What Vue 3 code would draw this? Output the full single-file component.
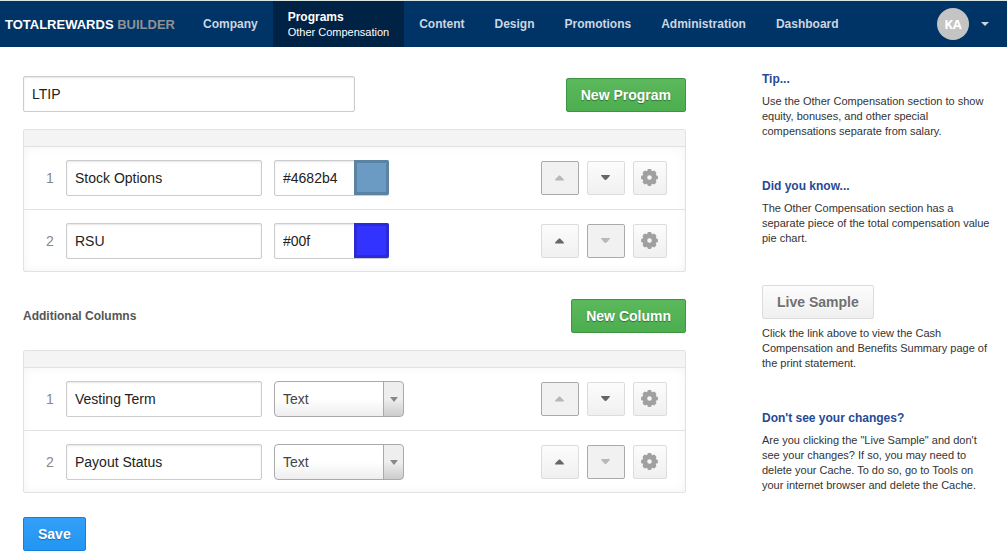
<script setup>
import { ref } from 'vue'

const navItems = [
  { label: 'Company' },
  { label: 'Programs', sub: 'Other Compensation' },
  { label: 'Content' },
  { label: 'Design' },
  { label: 'Promotions' },
  { label: 'Administration' },
  { label: 'Dashboard' },
]

const programName = ref('LTIP')

const panels = ref([
  {
    id: 'programs',
    title: 'Programs',
    rows: [
      { name: 'Stock Options', color: '#4682b4' },
      { name: 'RSU', color: '#00f' },
    ],
  },
  {
    id: 'columns',
    title: 'Additional Columns',
    rows: [
      { name: 'Vesting Term', type: 'Text' },
      { name: 'Payout Status', type: 'Text' },
    ],
  },
])

const gearTeeth = [0, 45, 90, 135]
</script>

<template>
  <header class="topbar">
    <a class="brand" href="#">TOTALREWARDS <span>BUILDER</span></a>
    <nav class="nav">
      <a
        v-for="item in navItems"
        :key="item.label"
        href="#"
        class="nav-item"
        :class="{ active: item.sub }"
      >
        <strong>{{ item.label }}</strong>
        <span v-if="item.sub" class="nav-sub">{{ item.sub }}</span>
      </a>
    </nav>
    <button class="account" type="button" aria-label="Account menu">
      <span class="avatar">KA</span>
      <svg class="caret" viewBox="0 0 8 4" aria-hidden="true"><path d="M0 0h8L4 4z" /></svg>
    </button>
  </header>

  <div class="page">
    <main>
      <template v-for="panel in panels" :key="panel.id">
        <div class="section-head" :class="panel.id">
          <input
            v-if="panel.id === 'programs'"
            v-model="programName"
            class="field title-field"
            type="text"
            aria-label="Section name"
          />
          <h2 v-else>{{ panel.title }}</h2>
          <button class="btn green" type="button">
            {{ panel.id === 'programs' ? 'New Program' : 'New Column' }}
          </button>
        </div>

        <section class="panel" :aria-label="panel.title">
          <div class="panel-head"></div>
          <ol>
            <li v-for="(row, i) in panel.rows" :key="i">
              <span class="num">{{ i + 1 }}</span>
              <input v-model="row.name" class="field name-field" type="text" aria-label="Name" />
              <div v-if="row.color" class="color-field">
                <input v-model="row.color" type="text" aria-label="Color" />
                <button
                  class="swatch"
                  type="button"
                  aria-label="Pick color"
                  :style="{ backgroundColor: row.color }"
                ></button>
              </div>
              <div v-else class="select-box">
                <select v-model="row.type" aria-label="Column type">
                  <option>Text</option>
                  <option>Number</option>
                </select>
              </div>
              <div class="actions">
                <button class="btn icon" type="button" aria-label="Move up" :disabled="i === 0">
                  <svg width="10" height="6" viewBox="0 0 10 6"><path d="M0 5Q0 4.500 4 .6q.5-.4 1 0Q9 4.500 9 5q0 .5-.6.5H.6Q0 5.500 0 5z" /></svg>
                </button>
                <button
                  class="btn icon"
                  type="button"
                  aria-label="Move down"
                  :disabled="i === panel.rows.length - 1"
                >
                  <svg width="10" height="6" viewBox="0 0 10 6"><path d="M0 .5Q0 0 .6 0h7.800Q9 0 9 .5 9 1 5 4.900q-.5.4-1 0Q0 1 0 .5z" /></svg>
                </button>
                <button class="btn icon gear" type="button" aria-label="Settings">
                  <svg width="18" height="18" viewBox="-8.500 -8.500 18 18">
                    <path
                      fill-rule="evenodd"
                      d="M-7 0a7 7 0 1 0 14 0a7 7 0 1 0-14 0zM-2.300 0a2.300 2.300 0 1 0 4.600 0a2.300 2.300 0 1 0-4.600 0z"
                    />
                    <g v-for="a in gearTeeth" :key="a" :transform="`rotate(${a})`">
                      <rect x="-2.100" y="-8.400" width="4.200" height="4" rx="1.300" />
                      <rect x="-2.100" y="4.400" width="4.200" height="4" rx="1.300" />
                    </g>
                  </svg>
                </button>
              </div>
            </li>
          </ol>
        </section>
      </template>
      <button class="btn blue" type="button">Save</button>
    </main>

    <aside>
      <section>
        <h3>Tip...</h3>
        <p>Use the Other Compensation section to show equity, bonuses, and other special compensations separate from salary.</p>
      </section>
      <section>
        <h3>Did you know...</h3>
        <p>The Other Compensation section has a separate piece of the total compensation value pie chart.</p>
      </section>
      <section>
        <button class="btn sample" type="button">Live Sample</button>
        <p>Click the link above to view the Cash Compensation and Benefits Summary page of the print statement.</p>
      </section>
      <section>
        <h3>Don't see your changes?</h3>
        <p>Are you clicking the "Live Sample" and don't see your changes? If so, you may need to delete your Cache. To do so, go to Tools on your internet browser and delete the Cache.</p>
      </section>
    </aside>
  </div>
</template>

<style>
body {
  background: #fff;
  font-family: "Liberation Sans", Arial, sans-serif;
}
</style>

<style scoped>
* {
  box-sizing: border-box;
}
button,
input,
select {
  font-family: inherit;
  margin: 0;
}

.topbar {
  display: flex;
  align-items: stretch;
  height: 47px;
  border-top: 1px solid #dbe5e2;
  background: #003366;
}
.topbar a {
  text-decoration: none;
}
.brand {
  align-self: center;
  flex: none;
  width: 188px;
  padding-left: 5px;
  color: #fff;
  font-size: 13px;
  font-weight: bold;
  white-space: nowrap;
}
.brand span {
  color: #8f9296;
}
.nav {
  display: flex;
  flex: 1;
}
.nav-item {
  display: flex;
  flex-direction: column;
  justify-content: center;
  padding: 0 15px;
  color: #ccd6e0;
  font-size: 12px;
  line-height: 16px;
  white-space: nowrap;
}
.nav-item.active {
  background: #002244;
  color: #fff;
}
.nav-sub {
  font-size: 11px;
  line-height: 15px;
}
.account {
  display: flex;
  align-items: center;
  gap: 12px;
  padding: 0 18px 0 0;
  border: 0;
  background: none;
}
.avatar {
  width: 32px;
  height: 32px;
  border-radius: 50%;
  background: #c4c4c4;
  color: #fff;
  font-family: "Open Sans", "Liberation Sans", sans-serif;
  font-size: 13px;
  font-weight: bold;
  line-height: 32px;
  text-align: center;
}
.caret {
  width: 8px;
  height: 4px;
  fill: #ccd6e0;
}

.page {
  display: grid;
  grid-template-columns: 1fr 230px;
  column-gap: 76px;
  padding: 0 15px 0 23px;
}
main {
  padding-top: 29px;
}
.section-head {
  display: flex;
  align-items: flex-end;
  justify-content: space-between;
  margin-bottom: 17px;
}
.section-head.columns {
  align-items: center;
  margin-top: 27px;
}
h2 {
  margin: 0;
  color: #555;
  font-size: 12px;
  line-height: 16px;
}

.field {
  height: 36px;
  padding: 0 8px;
  border: 1px solid #ccc;
  border-radius: 2px;
  background: #fff;
  box-shadow: inset 0 1px 2px rgba(0, 0, 0, 0.1);
  color: #222;
  font-size: 14px;
}
.title-field {
  width: 50%;
}
.name-field {
  width: 196px;
}

.panel {
  border: 1px solid #e2e2e2;
  border-radius: 2px;
}
.panel-head {
  height: 17px;
  border-bottom: 1px solid #e2e2e2;
  background: #f4f4f4;
}
ol {
  margin: 0;
  padding: 0;
  list-style: none;
  box-shadow: inset 0 0 10px rgba(0, 0, 0, 0.05);
}
li {
  display: flex;
  align-items: center;
  gap: 12px;
  padding: 13px 18px 13px 22px;
}
li + li {
  border-top: 1px solid #e2e2e2;
  padding-bottom: 12px;
}
.num {
  width: 8px;
  color: #888;
  font-size: 14px;
  line-height: 16px;
}
.color-field {
  display: flex;
  width: 115px;
  height: 36px;
  border: 1px solid #ccc;
  border-radius: 2px;
  box-shadow: inset 0 1px 2px rgba(0, 0, 0, 0.1);
}
.color-field input {
  flex: 1;
  min-width: 0;
  padding: 0 0 0 8px;
  border: 0;
  background: none;
  color: #222;
  font-size: 14px;
}
.swatch {
  width: 35px;
  height: 35px;
  margin: -1px -1px 0 0;
  padding: 0;
  border: 0;
  border-radius: 0 2px 2px 0;
  box-shadow: inset 0 0 0 3px rgba(0, 0, 0, 0.16), inset 0 0 0 35px rgba(255, 255, 255, 0.2);
}

.select-box {
  position: relative;
  width: 130px;
}
.select-box select {
  display: block;
  width: 100%;
  height: 36px;
  padding: 0 24px 0 8px;
  border: 1px solid #aaa;
  border-radius: 4px;
  appearance: none;
  background:
    linear-gradient(#aaa, #aaa) right 19px top / 1px 100% no-repeat,
    linear-gradient(#eee 50%, #ccc) right top / 19px 100% no-repeat,
    linear-gradient(#fff 50%, #eee);
  color: #444;
  font-size: 14px;
}
.select-box::after {
  position: absolute;
  top: 16px;
  right: 6px;
  width: 8px;
  height: 5px;
  background: #888;
  clip-path: polygon(0 0, 100% 0, 50% 100%);
  content: "";
  pointer-events: none;
}

.actions {
  display: flex;
  gap: 8px;
  margin-left: auto;
}
.btn {
  height: 34px;
  padding: 0 14px;
  border: 1px solid #dcdcdc;
  border-radius: 2px;
  font-size: 14px;
  font-weight: bold;
  white-space: nowrap;
}
.icon {
  display: flex;
  align-items: center;
  justify-content: center;
  width: 38px;
  padding: 0;
  background: linear-gradient(#fcfcfc, #f0f0f0);
  fill: #666;
}
.icon:disabled {
  border-color: #aaa;
  background: #f1f1f1;
  fill: #b8b8b8;
}
.icon.gear {
  width: 34px;
  fill: #a0a0a0;
}
.green {
  border-color: #3f9444;
  background: linear-gradient(#5cb85c, #4cae4f);
  color: #fff;
  text-shadow: 0 1px 1px rgba(0, 0, 0, 0.4);
}
.blue {
  margin-top: 24px;
  border-color: #1580dc;
  background: linear-gradient(#349ff8, #2196f3);
  color: #fff;
  text-shadow: 0 1px 1px rgba(0, 0, 0, 0.3);
}
.sample {
  display: block;
  background: linear-gradient(#fcfcfc, #f0f0f0);
  color: #707070;
  text-shadow: 0 1px 0 #fff;
}

aside {
  display: flex;
  flex-direction: column;
  gap: 39px;
  padding-top: 24px;
}
h3 {
  margin: 0;
  color: #264a96;
  font-size: 12px;
  line-height: 16px;
}
p {
  margin: 7px 0 0;
  color: #333;
  font-size: 11px;
  line-height: 15px;
}
</style>
